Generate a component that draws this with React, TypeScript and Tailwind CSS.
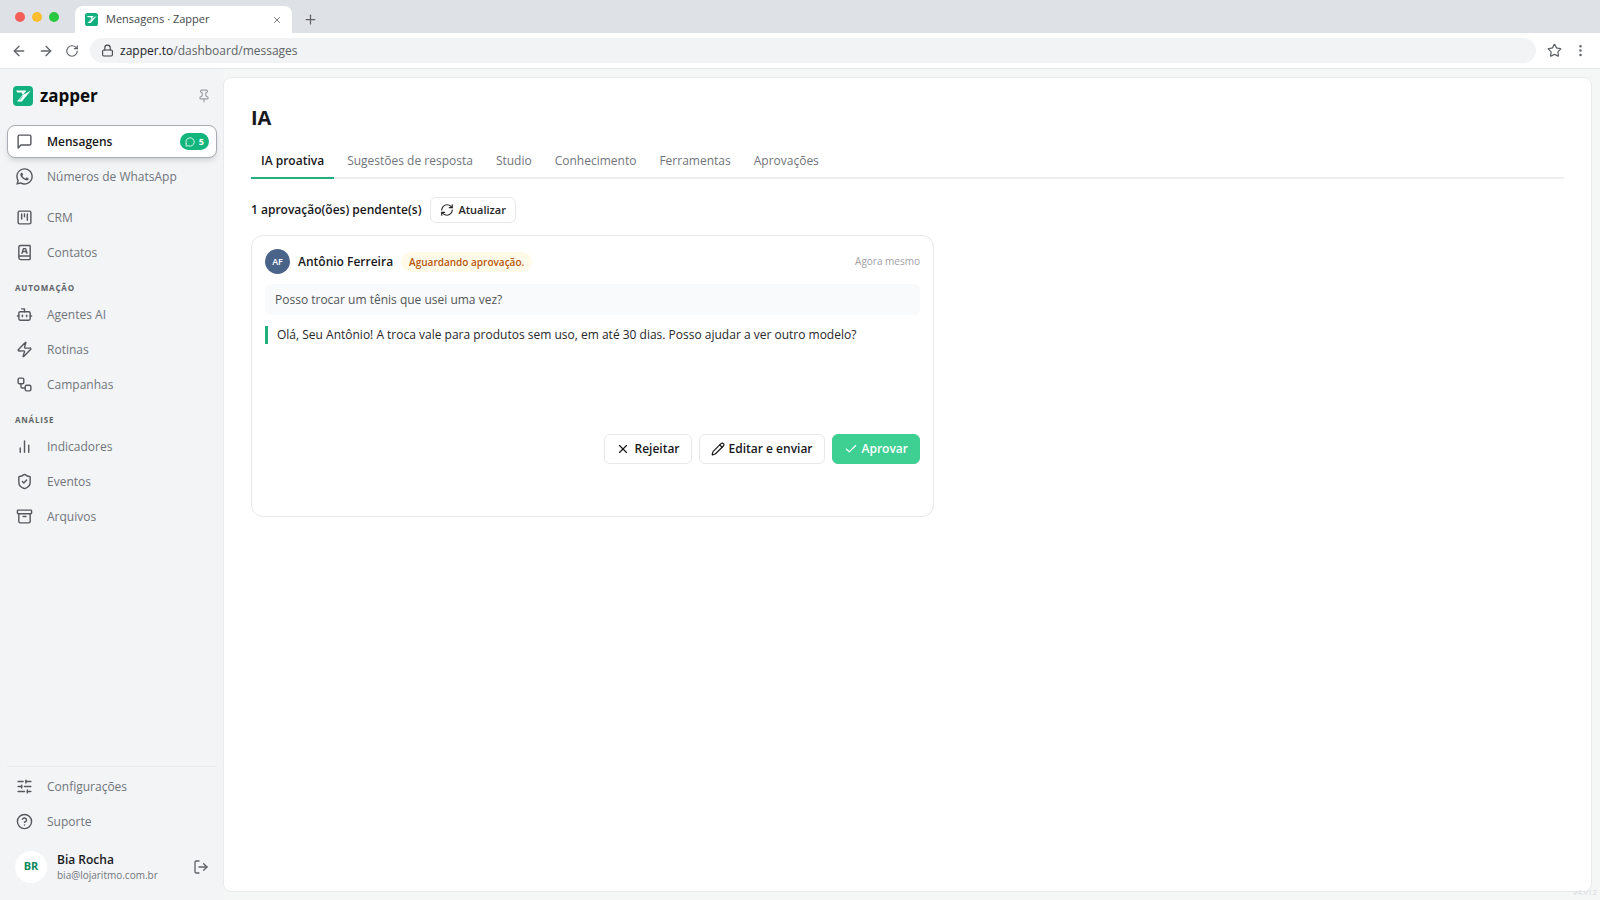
import type { ReactNode } from "react";
import {
  Archive,
  ArrowLeft,
  ArrowRight,
  Bot,
  Check,
  CircleQuestionMark,
  EllipsisVertical,
  Lock,
  LogOut,
  MessageCircle,
  Pencil,
  Pin,
  Plus,
  RefreshCw,
  RotateCw,
  ShieldCheck,
  SlidersHorizontal,
  SquareKanban,
  Star,
  Workflow,
  X,
  Zap,
} from "lucide-react";
import { FaWhatsapp } from "react-icons/fa";

type NavItem = { label: string; icon: ReactNode; active?: boolean; badge?: number };

function OutlineIcon({ children }: { children: ReactNode }) {
  return (
    <svg viewBox="0 0 24 24" className="size-[17px]" fill="none" stroke="currentColor" strokeWidth="2" strokeLinecap="round" strokeLinejoin="round" aria-hidden="true">
      {children}
    </svg>
  );
}

const mainItems: NavItem[] = [
  {
    label: "Mensagens",
    icon: (
      <OutlineIcon>
        <path d="M21 15a2 2 0 0 1-2 2H7l-4 4V5a2 2 0 0 1 2-2h14a2 2 0 0 1 2 2z" />
      </OutlineIcon>
    ),
    active: true,
    badge: 5,
  },
  { label: "Números de WhatsApp", icon: <FaWhatsapp className="size-[19px] shrink-0" /> },
];

const crmItems: NavItem[] = [
  { label: "CRM", icon: <SquareKanban className="size-[17px]" /> },
  {
    label: "Contatos",
    icon: (
      <OutlineIcon>
        <path d="M4 19.5v-15A2.500 2.500 0 0 1 6.500 2H19a1 1 0 0 1 1 1v18a1 1 0 0 1-1 1H6.500a1 1 0 0 1 0-5H20" />
        <path d="m8.500 13 2-6.500h3l2 6.500" />
        <path d="M9.500 10.500h5" />
      </OutlineIcon>
    ),
  },
];

const automationItems: NavItem[] = [
  { label: "Agentes AI", icon: <Bot className="size-[17px]" /> },
  { label: "Rotinas", icon: <Zap className="size-[17px]" /> },
  { label: "Campanhas", icon: <Workflow className="size-[17px]" /> },
];

const analysisItems: NavItem[] = [
  {
    label: "Indicadores",
    icon: (
      <OutlineIcon>
        <path d="M18 20V10M12 20V4M6 20v-6" />
      </OutlineIcon>
    ),
  },
  { label: "Eventos", icon: <ShieldCheck className="size-[17px]" /> },
  { label: "Arquivos", icon: <Archive className="size-[17px]" /> },
];

const footerItems: NavItem[] = [
  { label: "Configurações", icon: <SlidersHorizontal className="size-[17px]" /> },
  { label: "Suporte", icon: <CircleQuestionMark className="size-[17px]" /> },
];

const tabs = ["IA proativa", "Sugestões de resposta", "Studio", "Conhecimento", "Ferramentas", "Aprovações"];

function Logo({ className }: { className: string }) {
  return (
    <svg viewBox="0 0 20 20" className={className} aria-hidden="true">
      <rect width="20" height="20" rx="4" fill="#12b07f" />
      <path d="M3.200 4.600h10.300L9.600 9.200 18 4.600 8.800 15.400H4L9.800 8.800 8.600 6.600H4.200z" fill="#fff" />
      <path d="M9.400 10.200 6.600 14" fill="none" stroke="#12b07f" strokeWidth="0.700" />
    </svg>
  );
}

function BrowserChrome() {
  return (
    <header className="shrink-0 text-[#5f6368]">
      <div className="flex h-[33px] items-end bg-[#dee1e6]">
        <div className="flex h-full w-[75px] shrink-0 items-center gap-[7px] pl-[15px]">
          <span className="size-[10px] rounded-full bg-[#f35f58]" />
          <span className="size-[10px] rounded-full bg-[#f9bd2e]" />
          <span className="size-[10px] rounded-full bg-[#29c840]" />
        </div>
        <div className="flex h-[27px] w-[217px] items-center gap-2 rounded-t-lg bg-white px-[10px]">
          <Logo className="size-[13px]" />
          <span className="flex-1 text-[11px] text-[#45484c]">Mensagens · Zapper</span>
          <button aria-label="Fechar aba">
            <X className="size-[10px]" />
          </button>
        </div>
        <button aria-label="Nova aba" className="flex h-[27px] w-9 items-center justify-center">
          <Plus className="size-[15px]" />
        </button>
      </div>
      <div className="flex h-9 items-center border-b border-[#e3e5e8] bg-white pr-3 pl-[11px]">
        <div className="flex items-center gap-[11px]">
          <button aria-label="Voltar">
            <ArrowLeft className="size-4" />
          </button>
          <button aria-label="Avançar">
            <ArrowRight className="size-4" />
          </button>
          <button aria-label="Recarregar">
            <RotateCw className="size-[14px]" />
          </button>
        </div>
        <div className="mx-[11px] flex h-[25px] flex-1 items-center gap-[6px] rounded-full bg-[#f1f3f4] px-[11px] text-xs">
          <Lock className="size-[13px] text-[#3c4043]" />
          <span>
            <span className="text-[#202124]">zapper.to</span>/dashboard/messages
          </span>
        </div>
        <div className="flex items-center gap-[11px]">
          <button aria-label="Favoritar">
            <Star className="size-[15px]" />
          </button>
          <button aria-label="Menu">
            <EllipsisVertical className="size-[15px]" />
          </button>
        </div>
      </div>
    </header>
  );
}

function NavLink({ item }: { item: NavItem }) {
  return (
    <a
      href="#"
      className={
        item.active
          ? "flex h-[33px] items-center rounded-lg border border-[#a9acb2] bg-white px-[7px] text-xs font-semibold text-[#18181b] shadow-md"
          : "flex h-[33px] items-center border border-transparent px-[7px] text-xs text-[#71757b]"
      }
    >
      <span className="mr-[14px] flex w-[18px] justify-center text-[#55585e]">{item.icon}</span>
      <span className="flex-1">{item.label}</span>
      {item.badge && (
        <span className="flex h-[17px] items-center gap-1 rounded-full bg-[#12b57c] px-[5px] text-[9px] font-bold text-white">
          <MessageCircle className="size-[10px]" />
          {item.badge}
        </span>
      )}
    </a>
  );
}

function NavGroup({ title, items }: { title?: string; items: NavItem[] }) {
  return (
    <div>
      {title && <h2 className="flex h-[21px] items-center px-2 text-[8px] font-bold tracking-widest text-[#5f6368] uppercase">{title}</h2>}
      <div className="flex flex-col gap-[2px]">
        {items.map((item) => (
          <NavLink key={item.label} item={item} />
        ))}
      </div>
    </div>
  );
}

function Sidebar() {
  return (
    <aside className="flex w-[223px] shrink-0 flex-col bg-[#f2f4f6] pr-[6px] pl-[7px]">
      <div className="mb-[2px] flex h-[54px] items-center gap-[7px] px-[6px]">
        <Logo className="size-5" />
        <span className="flex-1 text-[17px] font-bold text-[#0c0c0e]">zapper</span>
        <button aria-label="Fixar menu" className="text-[#9a9da3]">
          <Pin className="size-[14px]" />
        </button>
      </div>
      <nav className="flex flex-1 flex-col gap-2">
        <NavGroup items={mainItems} />
        <NavGroup items={crmItems} />
        <NavGroup title="Automação" items={automationItems} />
        <NavGroup title="Análise" items={analysisItems} />
      </nav>
      <div className="border-t border-[#e9ebed] pt-[3px] pb-[5px]">
        <NavGroup items={footerItems} />
        <div className="flex h-[57px] items-center gap-[10px] px-2">
          <span className="flex size-8 items-center justify-center rounded-full bg-white text-[11px] font-bold text-[#0d8a5c]">BR</span>
          <div className="flex-1">
            <p className="text-xs leading-4 font-semibold text-[#18181b]">Bia Rocha</p>
            <p className="text-[10px] leading-[14px] text-[#71757b]">bia@lojaritmo.com.br</p>
          </div>
          <button aria-label="Sair" className="text-[#5f6368]">
            <LogOut className="size-4" />
          </button>
        </div>
      </div>
    </aside>
  );
}

function ApprovalCard() {
  return (
    <article className="flex min-h-[282px] max-w-[683px] flex-col rounded-xl border border-[#e8e8ea] p-[13px]">
      <header className="flex items-center gap-2">
        <span className="flex size-[25px] items-center justify-center rounded-full bg-[#4a6389] text-[9px] font-semibold text-white">AF</span>
        <h3 className="text-xs font-semibold text-[#18181b]">Antônio Ferreira</h3>
        <span className="rounded-full bg-[#fffbe8] px-2 text-[10px] leading-5 font-semibold text-[#b8560f]">Aguardando aprovação.</span>
        <time className="ml-auto text-[10px] text-[#a1a1a6]">Agora mesmo</time>
      </header>
      <p className="mt-[10px] rounded-md bg-[#f9fafb] px-[10px] py-[6px] text-xs leading-[19px] text-[#52555a]">Posso trocar um tênis que usei uma vez?</p>
      <p className="mt-[11px] border-l-[3px] border-[#21b07b] pl-[9px] text-xs leading-[18px] text-[#27272a]">
        Olá, Seu Antônio! A troca vale para produtos sem uso, em até 30 dias. Posso ajudar a ver outro modelo?
      </p>
      <div className="mt-[90px] flex justify-end gap-[7px] text-xs font-semibold text-[#18181b]">
        <button className="flex h-[30px] items-center gap-1 rounded-md border border-[#e8e8ea] px-[11px]">
          <X className="size-[14px]" />
          Rejeitar
        </button>
        <button className="flex h-[30px] items-center gap-1 rounded-md border border-[#e8e8ea] px-[11px]">
          <Pencil className="size-[14px]" />
          Editar e enviar
        </button>
        <button className="flex h-[30px] items-center gap-1 rounded-md border border-[#3ecf92] bg-[#3ecf92] px-[11px] text-white">
          <Check className="size-[14px]" />
          Aprovar
        </button>
      </div>
    </article>
  );
}

export default function App() {
  return (
    <div className="relative flex min-h-screen flex-col bg-[#f5f6f6] font-['Open_Sans',sans-serif]">
      <BrowserChrome />
      <div className="flex flex-1">
        <Sidebar />
        <main className="mt-2 mr-2 mb-2 flex-1 rounded-lg border border-[#e8eaec] bg-white px-[27px] py-6">
          <h1 className="text-xl leading-8 font-bold text-[#18181f]">IA</h1>
          <div role="tablist" className="mt-2 flex h-[37px] gap-[3px] border-b-2 border-[#ededef] text-xs">
            {tabs.map((tab, index) => (
              <button
                key={tab}
                role="tab"
                aria-selected={index === 0}
                className={
                  index === 0
                    ? "-mb-[2px] border-b-2 border-[#21b07b] px-[10px] pt-[3px] font-semibold text-[#18181b]"
                    : "-mb-[2px] border-b-2 border-transparent px-[10px] pt-[3px] text-[#71757b]"
                }
              >
                {tab}
              </button>
            ))}
          </div>
          <div className="mt-[18px] mb-3 flex items-center gap-[9px]">
            <h2 className="text-xs font-semibold text-[#18181b]">1 aprovação(ões) pendente(s)</h2>
            <button className="flex h-[26px] items-center gap-1 rounded-md border border-[#e8e8ea] px-[9px] text-[11px] font-semibold text-[#27272a]">
              <RefreshCw className="size-[14px]" />
              Atualizar
            </button>
          </div>
          <ApprovalCard />
        </main>
      </div>
      <span className="absolute right-[3px] bottom-[2px] text-[8px] leading-3 text-[#d9dbdd]">v4.v12</span>
    </div>
  );
}
